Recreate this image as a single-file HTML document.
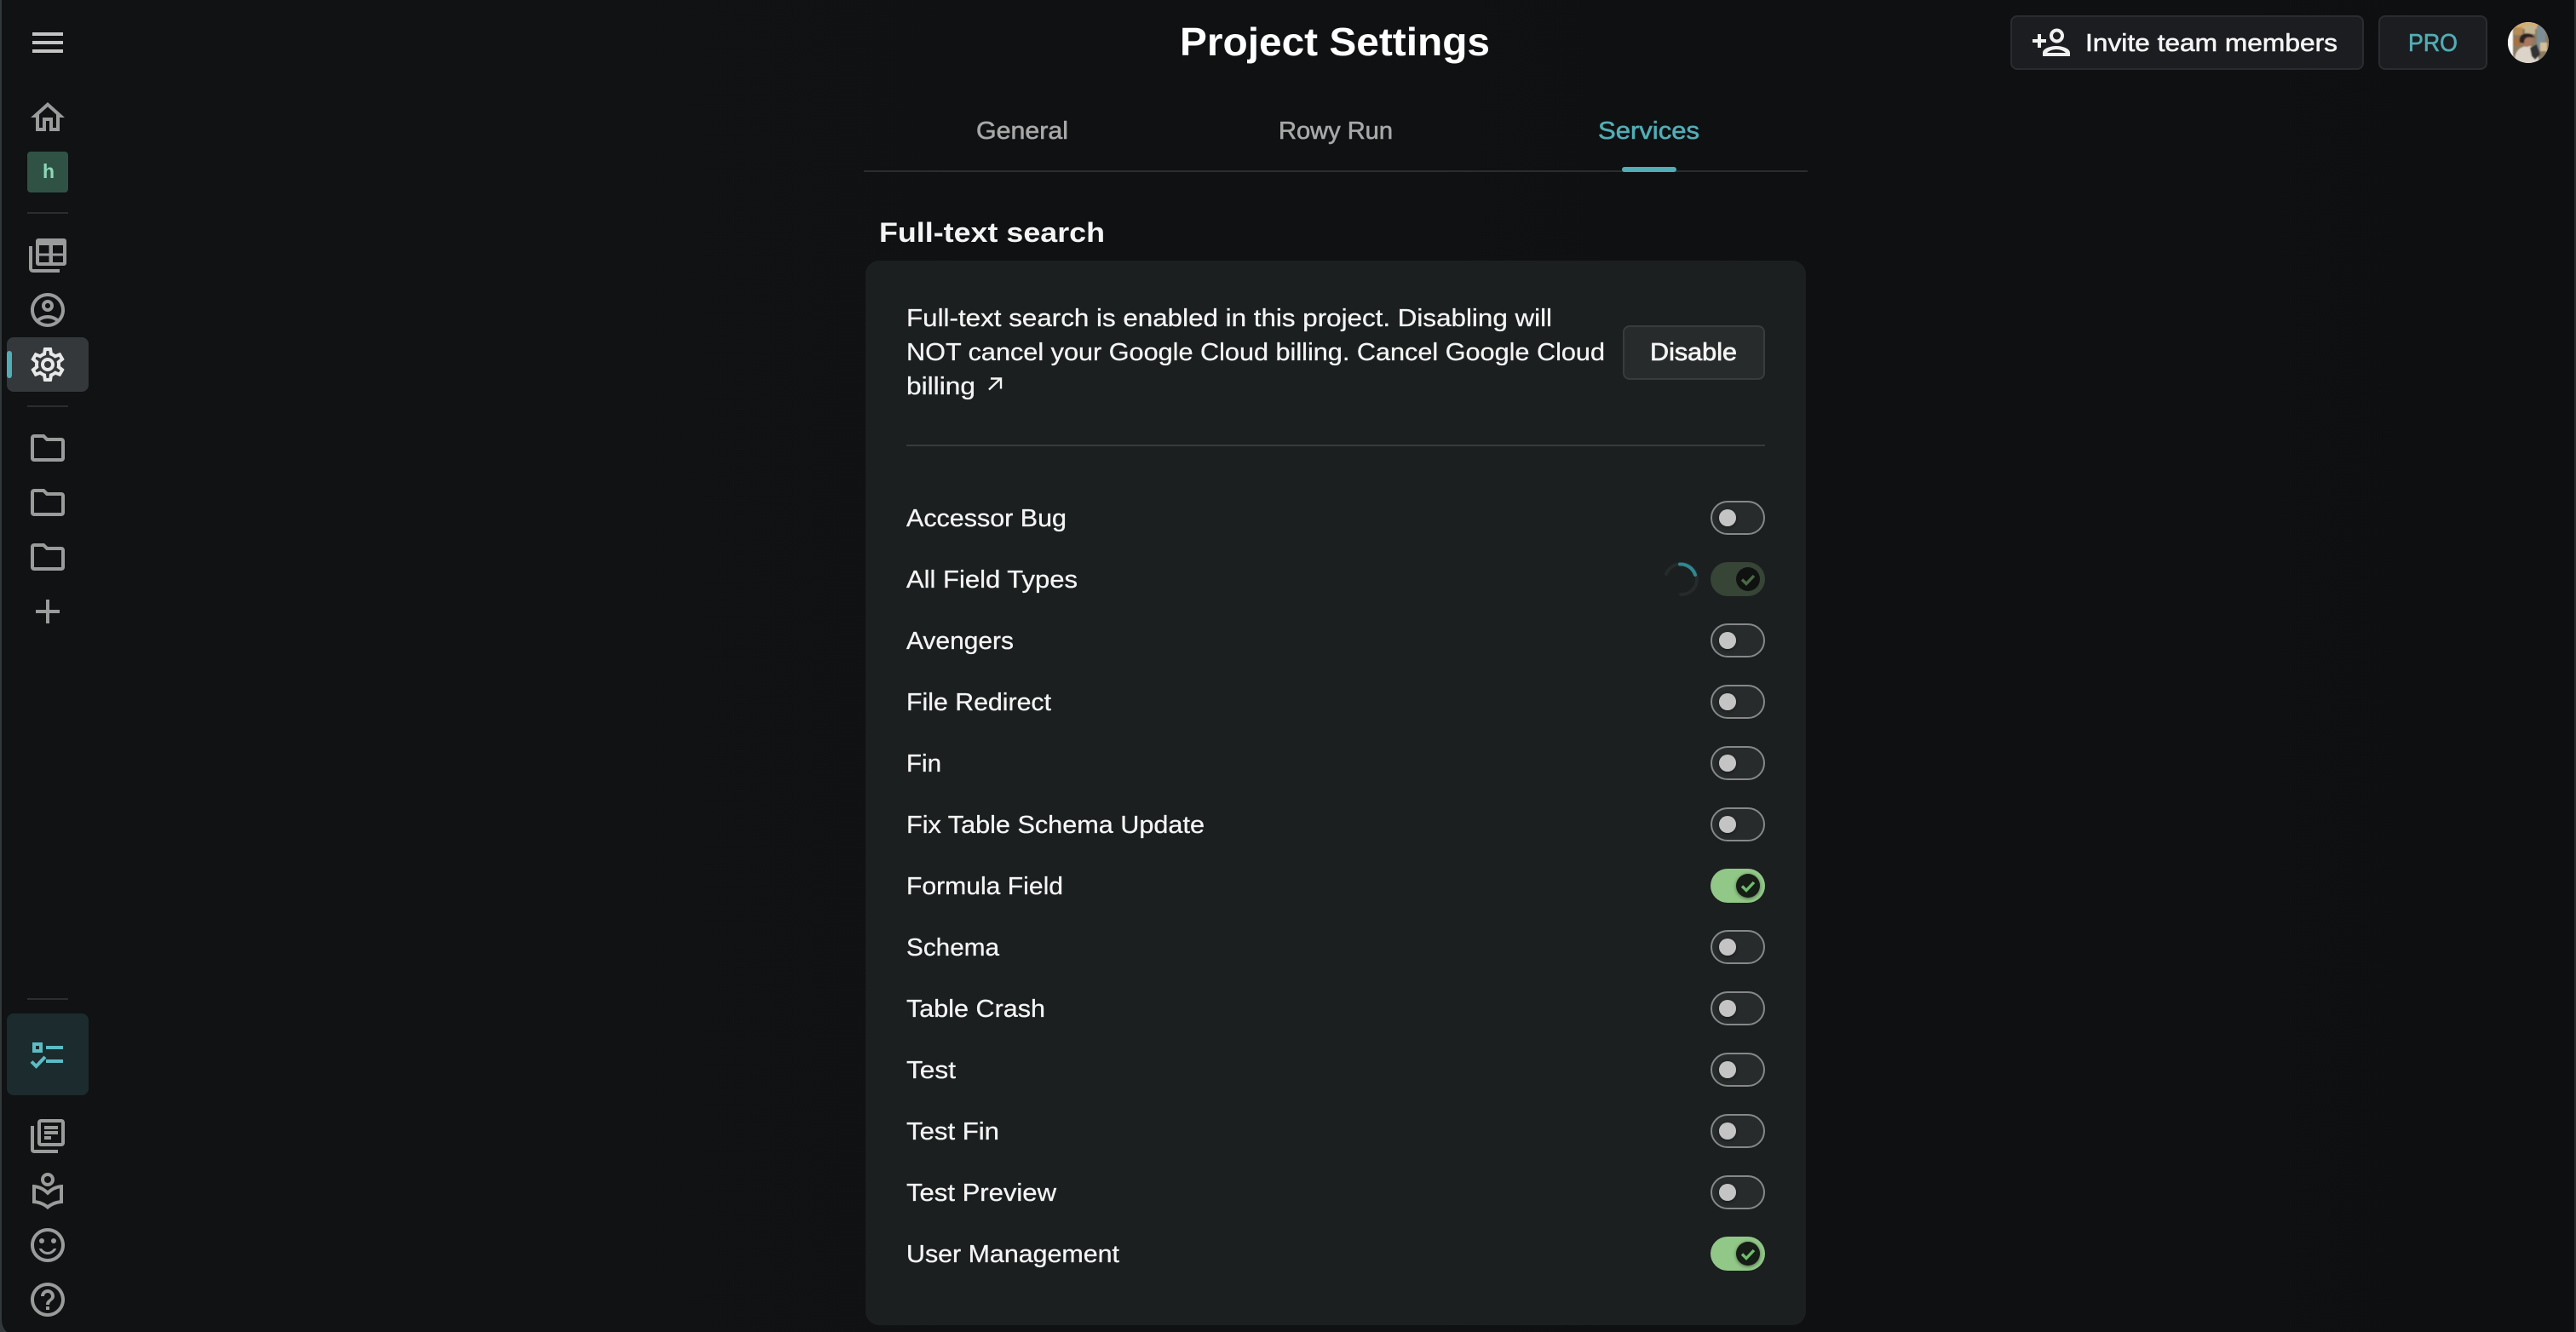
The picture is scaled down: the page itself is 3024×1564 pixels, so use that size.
<!DOCTYPE html>
<html lang="en"><head><meta charset="utf-8"><title>Project Settings</title>
<style>
html,body{margin:0;padding:0;background:#0f1113;width:3024px;height:1564px;overflow:hidden}
svg{display:block;position:absolute;left:0;top:0}
text{font-family:"Liberation Sans",sans-serif;fill:#f4f4f4;stroke:#f4f4f4;stroke-width:.3px}
.lbl{font-size:29px}
.ic{fill:#9a9b9b}
</style></head><body>
<svg width="3024" height="1564" viewBox="0 0 3024 1564" xmlns="http://www.w3.org/2000/svg">
<defs>
<linearGradient id="bg" x1="0" x2="1" y1="0" y2="0"><stop offset="0" stop-color="#101214"/><stop offset=".5" stop-color="#0f1113"/><stop offset="1" stop-color="#0e0f11"/></linearGradient>
<clipPath id="av"><circle cx="2968" cy="50" r="24"/></clipPath>
<filter id="bl" x="-20%" y="-20%" width="140%" height="140%"><feGaussianBlur stdDeviation="0.8"/></filter>
<filter id="sh" x="-50%" y="-50%" width="200%" height="200%"><feDropShadow dx="0" dy="1" stdDeviation="2" flood-color="#000" flood-opacity=".5"/></filter>
<g id="off"><rect x="2009" y="-19" width="62" height="38" rx="19" fill="#272b2c" stroke="#868889" stroke-width="2"/><circle cx="2028" cy="0" r="10" fill="#c4c4c4" filter="url(#sh)"/></g>
<g id="on"><rect x="2008" y="-20" width="64" height="40" rx="20" fill="#91c887"/><circle cx="2052" cy="0" r="14" fill="#161a16" filter="url(#sh)"/><path d="M2045 0.500l5 5 9-9.500" fill="none" stroke="#6dbd6e" stroke-width="3.400"/></g>
</defs>
<rect width="3024" height="1564" fill="url(#bg)"/>

<!-- window edges -->
<path d="M0 0H2V1548C2 1556 4 1560 8 1564H0Z" fill="#33383a"/>
<rect x="3022" y="0" width="2" height="1564" fill="#2a2c2e"/>

<!-- sidebar -->
<path transform="translate(32,26) scale(2)" fill="#c4c4c4" d="M3 18h18v-2H3v2zm0-5h18v-2H3v2zm0-7v2h18V6H3z"/>
<path class="ic" transform="translate(32,114) scale(2)" d="M12 5.690l5 4.500V18h-2v-6H9v6H7v-7.810l5-4.500M12 3L2 12h3v8h6v-6h2v6h6v-8h3L12 3z"/>
<rect x="32" y="178" width="48" height="48" rx="4" fill="#2f5245"/>
<text x="50" y="209" font-size="23" font-weight="700" style="fill:#8fd6b8;stroke:none">h</text>
<rect x="32" y="249" width="48" height="2" fill="#2b2e30"/>

<!-- table icon -->
<path class="ic" fill-rule="evenodd" d="M45 280H75A3 3 0 0 1 78 283V309A3 3 0 0 1 75 312H45A3 3 0 0 1 42 309V283A3 3 0 0 1 45 280ZM46 288V297.500H57.500V288ZM62 288V297.500H74V288ZM46 300.500V308H57.500V300.500ZM62 300.500V308H74V300.500Z"/>
<path d="M36 289V315.500A2.500 2.500 0 0 0 38.500 318H70" fill="none" stroke="#9a9b9b" stroke-width="4"/>
<path class="ic" transform="translate(32,340) scale(2)" d="M12 2C6.480 2 2 6.480 2 12s4.480 10 10 10 10-4.480 10-10S17.520 2 12 2zM7.350 18.500C8.660 17.560 10.260 17 12 17s3.340.56 4.650 1.500c-1.310.94-2.910 1.500-4.650 1.500s-3.340-.56-4.650-1.500zm10.790-1.380C16.450 15.800 14.320 15 12 15s-4.450.8-6.140 2.120C4.700 15.730 4 13.950 4 12c0-4.420 3.580-8 8-8s8 3.580 8 8c0 1.950-.7 3.730-1.860 5.120zM12 6c-1.930 0-3.500 1.570-3.500 3.500S10.070 13 12 13s3.500-1.570 3.500-3.500S13.930 6 12 6zm0 5c-.83 0-1.500-.67-1.500-1.500S11.170 8 12 8s1.500.67 1.500 1.500S12.830 11 12 11z"/>
<rect x="8" y="396" width="96" height="64" rx="8" fill="#34383a"/>
<rect x="8" y="412" width="6" height="32" rx="3" fill="#52adb6"/>
<path fill="#e8e8e8" transform="translate(32,404) scale(2)" d="M19.430 12.980c.04-.32.07-.64.07-.98 0-.34-.03-.66-.07-.98l2.110-1.650c.19-.15.24-.42.12-.64l-2-3.460c-.09-.16-.26-.25-.44-.25-.06 0-.12.01-.17.03l-2.490 1c-.52-.4-1.080-.73-1.690-.98l-.38-2.650C14.460 2.180 14.250 2 14 2h-4c-.25 0-.46.18-.49.42l-.38 2.650c-.61.25-1.170.59-1.690.98l-2.490-1c-.06-.02-.12-.03-.18-.03-.17 0-.34.09-.43.25l-2 3.460c-.13.22-.07.49.12.64l2.110 1.650c-.04.32-.07.65-.07.98 0 .33.03.66.07.98l-2.110 1.650c-.19.15-.24.42-.12.64l2 3.460c.09.16.26.25.44.25.06 0 .12-.01.17-.03l2.490-1c.52.4 1.080.73 1.690.98l.38 2.650c.03.24.24.42.49.42h4c.25 0 .46-.18.49-.42l.38-2.650c.61-.25 1.170-.59 1.690-.98l2.490 1c.06.02.12.03.18.03.17 0 .34-.09.43-.25l2-3.460c.12-.22.07-.49-.12-.64l-2.110-1.650zm-1.980-1.710c.04.31.05.52.05.73 0 .21-.02.43-.05.73l-.14 1.130.89.7 1.080.84-.7 1.210-1.270-.51-1.040-.42-.9.68c-.43.32-.84.56-1.250.73l-1.060.43-.16 1.130-.2 1.350h-1.400l-.19-1.350-.16-1.130-1.060-.43c-.43-.18-.83-.41-1.230-.71l-.91-.7-1.060.43-1.270.51-.7-1.210 1.080-.84.89-.7-.14-1.130c-.03-.31-.05-.54-.05-.74s.02-.43.05-.73l.14-1.130-.89-.7-1.080-.84.7-1.210 1.270.51 1.040.42.9-.68c.43-.32.84-.56 1.250-.73l1.060-.43.16-1.130.2-1.350h1.390l.19 1.350.16 1.130 1.060.43c.43.18.83.41 1.230.71l.91.7 1.060-.43 1.270-.51.7 1.210-1.070.85-.89.7.14 1.130zM12 8c-2.210 0-4 1.790-4 4s1.790 4 4 4 4-1.790 4-4-1.790-4-4-4zm0 6c-1.100 0-2-.9-2-2s.9-2 2-2 2 .9 2 2-.9 2-2 2z"/>
<rect x="32" y="476" width="48" height="2" fill="#2b2e30"/>

<path class="ic" transform="translate(32,502) scale(2)" d="M9.170 6l2 2H20v10H4V6h5.170M10 4H4c-1.100 0-1.990.9-1.990 2L2 18c0 1.100.9 2 2 2h16c1.100 0 2-.9 2-2V8c0-1.100-.9-2-2-2h-8l-2-2z"/>
<path class="ic" transform="translate(32,566) scale(2)" d="M9.170 6l2 2H20v10H4V6h5.170M10 4H4c-1.100 0-1.990.9-1.990 2L2 18c0 1.100.9 2 2 2h16c1.100 0 2-.9 2-2V8c0-1.100-.9-2-2-2h-8l-2-2z"/>
<path class="ic" transform="translate(32,630) scale(2)" d="M9.170 6l2 2H20v10H4V6h5.170M10 4H4c-1.100 0-1.990.9-1.990 2L2 18c0 1.100.9 2 2 2h16c1.100 0 2-.9 2-2V8c0-1.100-.9-2-2-2h-8l-2-2z"/>
<path class="ic" transform="translate(32,694) scale(2)" d="M19 13h-6v6h-2v-6H5v-2h6V5h2v6h6v2z"/>

<rect x="32" y="1172" width="48" height="2" fill="#2b2e30"/>
<rect x="8" y="1190" width="96" height="96" rx="8" fill="#1c2b2d"/>
<path fill="#5cbcc6" fill-rule="evenodd" d="M38 1224H50V1236H38ZM42 1228V1232H46V1228Z"/>
<rect x="54" y="1228" width="20" height="4" fill="#5cbcc6"/>
<rect x="54" y="1244" width="20" height="4" fill="#5cbcc6"/>
<path d="M37 1246.500L42.500 1252L53 1241" fill="none" stroke="#5cbcc6" stroke-width="4"/>
<path class="ic" transform="translate(32,1310) scale(2)" d="M4 6H2v14c0 1.100.9 2 2 2h14v-2H4V6zm16-4H8c-1.100 0-2 .9-2 2v12c0 1.100.9 2 2 2h12c1.100 0 2-.9 2-2V4c0-1.100-.9-2-2-2zm0 14H8V4h12v12zM10 9h8v2h-8zm0 3h4v2h-4zm0-6h8v2h-8z"/>
<path class="ic" transform="translate(32,1375) scale(2)" d="M12 9c2.210 0 4-1.790 4-4s-1.790-4-4-4-4 1.790-4 4 1.790 4 4 4zm0-6c1.100 0 2 .9 2 2s-.9 2-2 2-2-.9-2-2 .9-2 2-2zm0 8.550C9.640 9.350 6.480 8 3 8v11c3.480 0 6.640 1.350 9 3.550 2.360-2.190 5.520-3.550 9-3.550V8c-3.480 0-6.640 1.350-9 3.550zm7 5.580c-2.530.34-4.930 1.300-7 2.820-2.060-1.520-4.470-2.490-7-2.830v-6.950c2.100.38 4.050 1.350 5.640 2.830L12 14.280l1.360-1.270c1.590-1.480 3.540-2.450 5.640-2.830v6.950z"/>
<g class="ic" transform="translate(32,1438) scale(2)"><circle cx="15.500" cy="9.500" r="1.500"/><circle cx="8.500" cy="9.500" r="1.500"/><path d="M12 16c-1.480 0-2.750-.81-3.450-2H6.880c.8 2.050 2.790 3.500 5.120 3.500s4.320-1.450 5.120-3.500h-1.670c-.7 1.190-1.970 2-3.450 2z"/><path d="M11.990 2C6.470 2 2 6.480 2 12s4.470 10 9.990 10C17.520 22 22 17.520 22 12S17.520 2 11.990 2zM12 20c-4.420 0-8-3.580-8-8s3.580-8 8-8 8 3.580 8 8-3.580 8-8 8z"/></g>
<path class="ic" transform="translate(32,1502) scale(2)" d="M11 18h2v-2h-2v2zm1-16C6.480 2 2 6.480 2 12s4.480 10 10 10 10-4.480 10-10S17.520 2 12 2zm0 18c-4.410 0-8-3.590-8-8s3.590-8 8-8 8 3.590 8 8-3.590 8-8 8zm0-14c-2.210 0-4 1.790-4 4h2c0-1.100.9-2 2-2s2 .9 2 2c0 2-3 1.750-3 5h2c0-2.250 3-2.500 3-5 0-2.210-1.790-4-4-4z"/>

<!-- title -->
<text x="1385" y="65" font-size="46" font-weight="700" textLength="364" lengthAdjust="spacingAndGlyphs" style="fill:#fff;stroke:none">Project Settings</text>

<!-- header buttons -->
<rect x="2361" y="19" width="413" height="62" rx="7" fill="#1c1d20" stroke="#2b2c2f" stroke-width="2"/>
<rect x="2793" y="19" width="126" height="62" rx="7" fill="#1c1d20" stroke="#2b2c2f" stroke-width="2"/>
<path d="M2386 48H2402M2394 40V56" stroke="#f0f0f0" stroke-width="4" fill="none"/>
<circle cx="2414.500" cy="42" r="6.500" fill="none" stroke="#f0f0f0" stroke-width="4"/>
<path fill="#f0f0f0" fill-rule="evenodd" d="M2398 66V62C2398 57 2407 54 2414 54S2430 57 2430 62V66ZM2403 62H2425C2423 60 2419 58 2414 58S2405 60 2403 62Z"/>
<text x="2448" y="60" class="lbl" textLength="296" lengthAdjust="spacingAndGlyphs" style="stroke-width:.6px">Invite team members</text>
<text x="2827" y="60" class="lbl" textLength="58" lengthAdjust="spacingAndGlyphs" style="fill:#52adb6;stroke:#52adb6;stroke-width:.6px">PRO</text>

<!-- avatar -->
<circle cx="2968" cy="50" r="24" fill="#fafafa"/>
<g clip-path="url(#av)"><g filter="url(#bl)">
<rect x="2950" y="26" width="44" height="48" fill="#8a7c62"/>
<rect x="2950" y="26" width="30" height="8" fill="#d4ae70"/>
<rect x="2951" y="32" width="10" height="9" fill="#b88d55"/>
<rect x="2964" y="30" width="12" height="10" fill="#c4b591"/>
<rect x="2978" y="30" width="10" height="28" fill="#7d8e96"/>
<rect x="2951" y="44" width="8" height="10" fill="#a6713f"/>
<rect x="2982" y="50" width="8" height="10" fill="#d6bf97"/>
<path d="M2952 74C2951 62 2957 54 2968 54S2980 62 2980 74Z" fill="#dcd4c8"/>
<ellipse cx="2966" cy="47" rx="7" ry="8" fill="#a9785e"/>
<path d="M2958 50C2956 40 2964 38 2972 40L2976 44L2971 44C2966 43 2963 45 2963 51Z" fill="#2a2220"/>
<path d="M2970 56L2978 52L2982 64L2976 70L2972 66Z" fill="#333335"/>
</g>
<path d="M2944 26H2950C2947 34 2949 44 2948 50C2947 60 2950 68 2956 74H2944Z" fill="#fafafa"/>
</g>

<!-- tabs -->
<text x="1146" y="163" class="lbl" textLength="108" lengthAdjust="spacingAndGlyphs" style="fill:#a8a8a8;stroke:#a8a8a8;stroke-width:.6px">General</text>
<text x="1501" y="163" class="lbl" textLength="134" lengthAdjust="spacingAndGlyphs" style="fill:#a8a8a8;stroke:#a8a8a8;stroke-width:.6px">Rowy Run</text>
<text x="1876" y="163" class="lbl" textLength="119" lengthAdjust="spacingAndGlyphs" style="fill:#52adb6;stroke:#52adb6;stroke-width:.6px">Services</text>
<rect x="1014" y="200" width="1108" height="2" fill="#2a2d2f"/>
<rect x="1904" y="196" width="64" height="6" rx="3" fill="#52adb6"/>

<text x="1032" y="284" font-size="32" font-weight="700" textLength="265" lengthAdjust="spacingAndGlyphs" style="stroke:none">Full-text search</text>

<!-- card -->
<rect x="1016" y="306" width="1104" height="1250" rx="16" fill="#1b1f20"/>

<text x="1064" y="383" class="lbl" textLength="758" lengthAdjust="spacingAndGlyphs">Full-text search is enabled in this project. Disabling will</text>
<text x="1064" y="423" class="lbl" textLength="820" lengthAdjust="spacingAndGlyphs">NOT cancel your Google Cloud billing. Cancel Google Cloud</text>
<text x="1064" y="463" class="lbl" textLength="81" lengthAdjust="spacingAndGlyphs">billing</text>
<path d="M1161 457.500L1174 445M1163 444.500H1175V456.500" fill="none" stroke="#f4f4f4" stroke-width="2.400"/>

<rect x="1906" y="383" width="165" height="62" rx="7" fill="#272b2c" stroke="#383c3d" stroke-width="2"/>
<text x="1937" y="423" class="lbl" textLength="102" lengthAdjust="spacingAndGlyphs" style="stroke-width:.7px">Disable</text>

<rect x="1064" y="522" width="1008" height="2" fill="#383b3d"/>

<!-- rows -->
<text x="1064" y="618" class="lbl" textLength="188" lengthAdjust="spacingAndGlyphs">Accessor Bug</text>
<text x="1064" y="690" class="lbl" textLength="201" lengthAdjust="spacingAndGlyphs">All Field Types</text>
<text x="1064" y="762" class="lbl" textLength="126" lengthAdjust="spacingAndGlyphs">Avengers</text>
<text x="1064" y="834" class="lbl" textLength="170" lengthAdjust="spacingAndGlyphs">File Redirect</text>
<text x="1064" y="906" class="lbl" textLength="41" lengthAdjust="spacingAndGlyphs">Fin</text>
<text x="1064" y="978" class="lbl" textLength="350" lengthAdjust="spacingAndGlyphs">Fix Table Schema Update</text>
<text x="1064" y="1050" class="lbl" textLength="184" lengthAdjust="spacingAndGlyphs">Formula Field</text>
<text x="1064" y="1122" class="lbl" textLength="109" lengthAdjust="spacingAndGlyphs">Schema</text>
<text x="1064" y="1194" class="lbl" textLength="163" lengthAdjust="spacingAndGlyphs">Table Crash</text>
<text x="1064" y="1266" class="lbl" textLength="58" lengthAdjust="spacingAndGlyphs">Test</text>
<text x="1064" y="1338" class="lbl" textLength="109" lengthAdjust="spacingAndGlyphs">Test Fin</text>
<text x="1064" y="1410" class="lbl" textLength="176" lengthAdjust="spacingAndGlyphs">Test Preview</text>
<text x="1064" y="1482" class="lbl" textLength="250" lengthAdjust="spacingAndGlyphs">User Management</text>

<!-- toggles -->
<use href="#off" y="608"/>
<rect x="2008" y="660" width="64" height="40" rx="20" fill="#364536"/>
<circle cx="2052" cy="680" r="14" fill="#0f1210"/>
<path d="M2045 680.500l5 5 9-9.500" fill="none" stroke="#4a6a45" stroke-width="3.400"/>
<path d="M1975 662A18 18 0 0 1 1973 698M1956 674A18 18 0 0 1 1970 662.500" fill="none" stroke="#262a2b" stroke-width="4" stroke-linecap="round"/>
<path d="M1972 662.500A18 18 0 0 1 1990 675" fill="none" stroke="#2f8890" stroke-width="4" stroke-linecap="round"/>
<use href="#off" y="752"/>
<use href="#off" y="824"/>
<use href="#off" y="896"/>
<use href="#off" y="968"/>
<use href="#on" y="1040"/>
<use href="#off" y="1112"/>
<use href="#off" y="1184"/>
<use href="#off" y="1256"/>
<use href="#off" y="1328"/>
<use href="#off" y="1400"/>
<use href="#on" y="1472"/>
</svg>
</body></html>
